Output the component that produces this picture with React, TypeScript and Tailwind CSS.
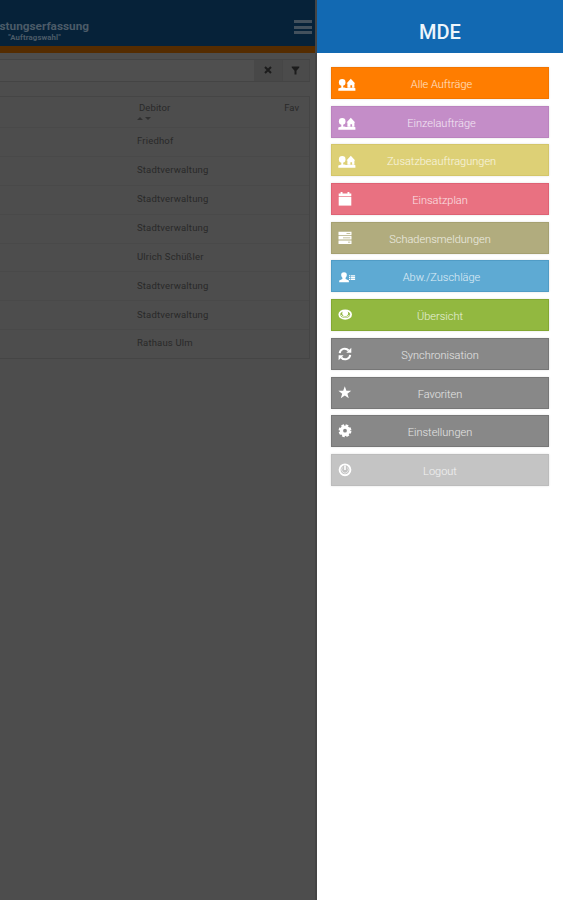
import type { ReactNode } from "react";

const Estate = () => (
  <svg width="18" height="14" viewBox="0 0 18 14" fill="currentColor">
    <circle cx="4.2" cy="4.4" r="3.3" />
    <path d="M3.300 7h1.900v3.500H3.300zM12.800.8 17.200 5.600h-.8V9.800h-2.300V7.300h-1.700v2.500H9.400V5.600h-.9z" />
    <path d="M.3 10.600C3 9.200 5.500 9.500 8 9.900s6-.7 9.400.3V12.800H.3z" />
  </svg>
);
const Calendar = () => (
  <svg width="14" height="14" viewBox="0 0 14 14" fill="currentColor">
    <path d="M.7 1.600h1.900V0h1.900v1.600h5V0h1.900v1.600h1.900v2.600H.7z" />
    <path d="M.7 4.900h12.600v8.700H.7z" />
  </svg>
);
const Report = () => (
  <svg width="14" height="14" viewBox="0 0 14 14" fill="currentColor">
    <path fillRule="evenodd" d="M.5.700h13v3.500H.5zM8.500 2v.8h3.800V2zM.5 5.100h13v3.500H.5zM5 6.400v.8h7.300v-.8zM.5 9.500h13V13H.5zM10 10.800v.8h2.300v-.8z" />
  </svg>
);
const Person = () => (
  <svg width="17" height="14" viewBox="0 0 17 14" fill="currentColor">
    <path d="M5 2.200c2 0 3 1.300 2.800 3-.1 1.200-.6 2-1.200 2.500v1.200l3.300 1.600v1.700H.2v-1.700l3.200-1.600V7.700c-.6-.5-1.100-1.300-1.200-2.500C2 3.500 3 2.200 5 2.200z" />
    <path d="M10 5.200h1.200v1.100H10zm0 1.800h1.200v1.100H10zm0 1.800h1.200v1.200H10zm1.800-3.600h4.300v1.200h-4.300zm0 1.800h4.300v1.200h-4.300zm0 1.800h4.300V10h-4.300z" />
  </svg>
);
const Eye = () => (
  <svg width="15" height="14" viewBox="0 0 15 14" fill="none" stroke="currentColor">
    <ellipse cx="7.200" cy="6.600" rx="5.900" ry="4.300" strokeWidth="1.800" />
    <circle cx="7.200" cy="5.200" r="2.900" fill="currentColor" stroke="none" />
    <path d="M2.900 6.800c1.500 3 7.100 3 8.600 0" strokeWidth="1" />
  </svg>
);
const Sync = () => (
  <svg width="15" height="14" viewBox="0 0 15 14" fill="none" stroke="currentColor" strokeWidth="2">
    <path d="M1.700 6.100C2.200 1.600 7.700.2 10.700 3.500M12.200 7.900c-.5 4.500-6 5.900-9 2.600" />
    <path d="M13.300.7v5h-5zM.6 13.300v-5h5z" fill="currentColor" stroke="none" />
  </svg>
);
const Star = () => (
  <svg width="14" height="14" viewBox="0 0 14 14" fill="currentColor">
    <path d="m6.800.3 1.600 4.400 4.800.1-3.800 2.900 1.400 4.600-4-2.700-4 2.700 1.400-4.600L.4 4.800l4.800-.1z" />
  </svg>
);
const Gear = () => (
  <svg width="14" height="14" viewBox="0 0 14 14" fill="none" stroke="currentColor">
    <circle cx="7" cy="6.700" r="5.500" strokeWidth="1.900" strokeDasharray="2.700 1.620" />
    <circle cx="7" cy="6.700" r="3.600" strokeWidth="3.400" />
  </svg>
);
const Power = () => (
  <svg width="14" height="14" viewBox="0 0 14 14" fill="none" stroke="currentColor" strokeWidth="1.900">
    <circle cx="7" cy="6.800" r="5.400" />
    <path d="M7 2.500v4.500" strokeWidth="1.600" />
    <path d="M4.600 4.500a3.300 3.300 0 1 0 4.800 0" strokeWidth=".6" />
  </svg>
);

type Item = { label: string; icon: ReactNode; color: string; nudge: string; text: string };
const items: Item[] = [
  { label: "Alle Aufträge", icon: <Estate />, color: "bg-[#ff7d00] border-[#f27500]", nudge: "pt-1", text: "pl-[3px]" },
  { label: "Einzelaufträge", icon: <Estate />, color: "bg-[#c48dc8] border-[#bb83bf]", nudge: "pt-1", text: "pl-[3px]" },
  { label: "Zusatzbeauftragungen", icon: <Estate />, color: "bg-[#ddd076] border-[#d4c66a]", nudge: "pt-1", text: "pl-[3px]" },
  { label: "Einsatzplan", icon: <Calendar />, color: "bg-[#e97181] border-[#de6274]", nudge: "", text: "" },
  { label: "Schadensmeldungen", icon: <Report />, color: "bg-[#b1ac7e] border-[#a5a071]", nudge: "", text: "" },
  { label: "Abw./Zuschläge", icon: <Person />, color: "bg-[#5eaad3] border-[#509cc6]", nudge: "pt-[2px] pl-px", text: "pl-[3px]" },
  { label: "Übersicht", icon: <Eye />, color: "bg-[#92b840] border-[#83a832]", nudge: "", text: "" },
  { label: "Synchronisation", icon: <Sync />, color: "bg-[#888888] border-[#777777]", nudge: "", text: "" },
  { label: "Favoriten", icon: <Star />, color: "bg-[#888888] border-[#777777]", nudge: "", text: "" },
  { label: "Einstellungen", icon: <Gear />, color: "bg-[#888888] border-[#777777]", nudge: "", text: "" },
  { label: "Logout", icon: <Power />, color: "bg-[#c4c4c4] border-[#bcbcbc]", nudge: "", text: "" },
];

const debtors = [
  "Friedhof",
  "Stadtverwaltung",
  "Stadtverwaltung",
  "Stadtverwaltung",
  "Ulrich Schüßler",
  "Stadtverwaltung",
  "Stadtverwaltung",
  "Rathaus Ulm",
];

export default function App() {
  return (
    <div className="flex h-[900px] w-[563px] overflow-hidden bg-white font-['Roboto','Liberation_Sans',sans-serif]">
      <main className="flex w-[317px] shrink-0 flex-col border-r-2 border-[#444] bg-[#4d4d4d]">
        <header className="flex h-[53px] justify-between border-b-[7px] border-[#552c00] bg-[#062239]">
          <div className="-ml-[19px] w-[108px] pt-[20px] text-center text-[#4b5b68]">
            <h1 className="flex justify-end text-[11.800px] leading-[13px] font-bold whitespace-nowrap">Leistungserfassung</h1>
            <p className="pr-px text-[7.800px] leading-[10px] font-bold tracking-[.1px]">"Auftragswahl"</p>
          </div>
          <div className="mt-5 mr-[3px] flex h-[14px] w-[18px] flex-col justify-between">
            <i className="h-[3px] bg-[#43515d]" />
            <i className="h-[3px] bg-[#43515d]" />
            <i className="h-[3px] bg-[#43515d]" />
          </div>
        </header>
        <div className="mt-[6px] mr-[5px] flex h-[23px] border-y border-[#444]">
          <div className="flex-1 bg-[#4f4f4f]" />
          <div className="flex w-7 items-center justify-center bg-[#484848] pb-px text-[#1c1c1c]">
            <svg width="8" height="8" viewBox="0 0 8 8" stroke="currentColor" strokeWidth="2"><path d="m1 1 6 6M7 1 1 7" /></svg>
          </div>
          <div className="flex w-7 items-center justify-center border-x border-[#464646] bg-[#4b4b4b] pr-px pb-px text-[#1c1c1c]">
            <svg width="9" height="9" viewBox="0 0 9 9" fill="currentColor"><path d="M.7.500h7.600v1L5.500 4.800v3.700h-2V4.800L.7 1.500z" /></svg>
          </div>
        </div>
        <section className="mt-[14px] mr-[5px] flex h-[263px] flex-col border-y border-r border-[#454545] text-[9.500px] text-[#292929]">
          <div className="flex h-[30px] shrink-0 justify-between pt-[5px] pr-[10px] pl-[139px] leading-[12px]">
            <div>
              <span className="block tracking-[.1px]">Debitor</span>
              <svg width="14" height="5" viewBox="0 0 14 5" fill="#303030" className="mt-[2px] -ml-[2px]"><path d="m0 4 3-3 3 3zM8 1h6l-3 3z" /></svg>
            </div>
            <span>Fav</span>
          </div>
          {debtors.map((name, index) => (
            <div key={index} className="flex flex-1 items-center border-t border-[#494949] pb-px pl-[137px] tracking-[.18px]">{name}</div>
          ))}
        </section>
      </main>
      <aside className="flex flex-1 flex-col bg-white">
        <header className="flex h-[53px] items-center justify-center bg-[#1269b2] pt-[11px] text-[20px] font-medium text-[#edf5fb]">MDE</header>
        <nav className="mt-[14px] mr-[14px] ml-[14px] flex flex-col gap-[6.700px]">
          {items.map((item) => (
            <button
              key={item.label}
              className={"grid h-8 grid-cols-[20px_1fr_20px] items-center border px-[6px] text-white shadow-[0_0_2px_rgba(0,0,0,.12)] " + item.color}
            >
              <span className={"flex w-5 justify-start " + item.nudge}>{item.icon}</span>
              <span className={"pt-[4px] text-center text-[11px] leading-4 font-light whitespace-nowrap text-white/80 " + item.text}>{item.label}</span>
            </button>
          ))}
        </nav>
      </aside>
    </div>
  );
}
